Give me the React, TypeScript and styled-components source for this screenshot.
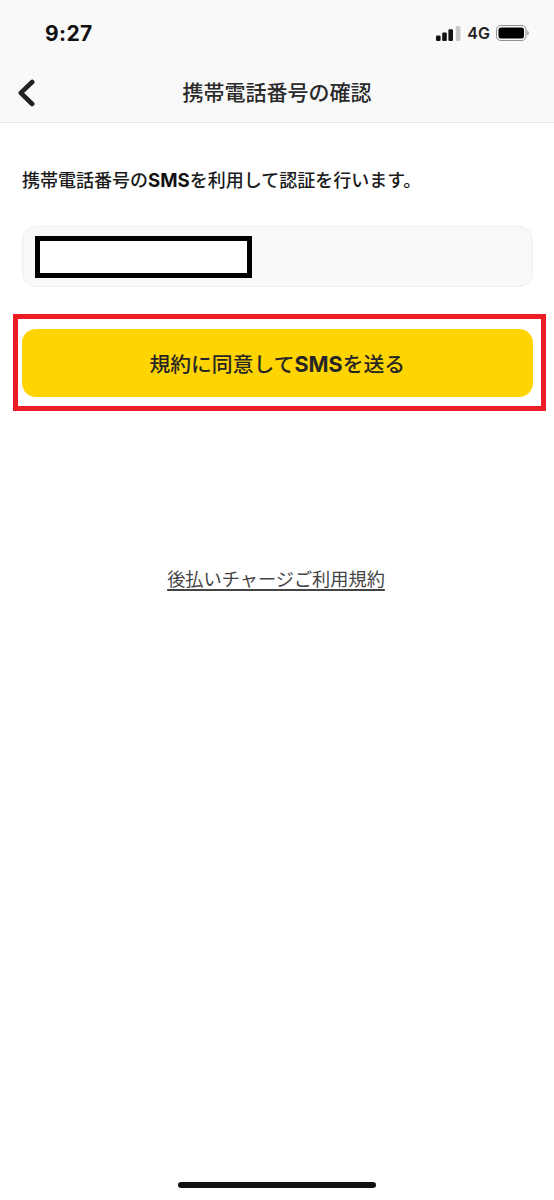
import styled, { createGlobalStyle } from "styled-components";

const GlobalStyle = createGlobalStyle`
    html, body {
        margin: 0;
        padding: 0;
        background: #ffffff;
    }
    body {
        font-family: "Inter", "Noto Sans CJK JP", sans-serif;
        color: #222222;
    }
`;

const App = () => {
    return (
        <Page>
            <GlobalStyle />
            <Header>
                <StatusBar>
                    <Time>9:27</Time>
                    <StatusIcons>
                        <svg width="25" height="15" viewBox="0 0 25 15">
                            <rect x="0" y="9.5" width="4.6" height="5.5" rx="1.2" fill="#111" />
                            <rect x="6.2" y="6.5" width="4.6" height="8.5" rx="1.2" fill="#111" />
                            <rect x="12.4" y="3.2" width="4.6" height="11.8" rx="1.2" fill="#111" />
                            <rect x="19.8" y="0" width="4.6" height="15" rx="1.2" fill="#c8c8c8" />
                        </svg>
                        <Network>4G</Network>
                        <svg width="33" height="16" viewBox="0 0 33 16">
                            <rect x="0.5" y="0.5" width="29.5" height="15" rx="4.2" fill="none" stroke="#8e8e8e" />
                            <rect x="2.5" y="2.5" width="25.5" height="11" rx="2.5" fill="#000" />
                            <path d="M31.3 5.7c1 .4 1.5 1.2 1.5 2.3s-.5 1.9-1.5 2.3z" fill="#8e8e8e" />
                        </svg>
                    </StatusIcons>
                </StatusBar>
                <NavBar>
                    <BackButton aria-label="戻る">
                        <svg width="20" height="28" viewBox="0 0 20 28">
                            <path d="M16.2 3 L4.8 13.8 L16.2 25" fill="none" stroke="#222" strokeWidth="4.6" strokeLinecap="round" strokeLinejoin="round" />
                        </svg>
                    </BackButton>
                    <NavTitle>携帯電話番号の確認</NavTitle>
                </NavBar>
            </Header>
            <Content>
                <Lead>携帯電話番号の<strong>SMS</strong>を利用して認証を行います。</Lead>
                <PhoneField>
                    <Redaction />
                </PhoneField>
                <Highlight>
                    <SubmitButton>規約に同意して<strong>SMS</strong>を送る</SubmitButton>
                </Highlight>
                <TermsLink href="#">後払いチャージご利用規約</TermsLink>
            </Content>
            <HomeIndicator />
        </Page>
    );
};

export default App;

const Page = styled.div`
    display: flex;
    flex-direction: column;
    min-height: 100vh;
    box-sizing: border-box;
    padding-bottom: 12px;
`;

const Header = styled.header`
    background: #f9f9f9;
    border-bottom: 1px solid #e6e6e6;
`;

const StatusBar = styled.div`
    display: flex;
    align-items: center;
    justify-content: space-between;
    height: 66px;
    padding: 0 25px 0 45px;
    box-sizing: border-box;
`;

const Time = styled.span`
    font-size: 21px;
    font-weight: 700;
    color: #111111;
    letter-spacing: 0.4px;
`;

const StatusIcons = styled.div`
    display: flex;
    align-items: center;
    gap: 6px;
`;

const Network = styled.span`
    font-size: 16px;
    font-weight: 600;
    color: #222222;
`;

const NavBar = styled.nav`
    position: relative;
    display: flex;
    align-items: center;
    justify-content: center;
    height: 56px;
    box-sizing: border-box;
    padding-bottom: 2px;
`;

const BackButton = styled.button`
    position: absolute;
    left: 16px;
    top: 13px;
    display: flex;
    padding: 0;
    border: 0;
    background: none;
`;

const NavTitle = styled.h1`
    margin: 0;
    font-size: 21px;
    font-weight: 500;
    line-height: 30px;
    color: #2a2a2a;
`;

const Content = styled.main`
    display: flex;
    flex-direction: column;
    align-items: stretch;
    padding: 0 8px 0 13px;
`;

const Lead = styled.p`
    margin: 44px 0 0 9px;
    font-size: 18px;
    font-weight: 500;
    line-height: 26px;
    color: #1a1a1a;
    white-space: nowrap;

    strong {
        font-weight: 700;
        font-size: 18.6px;
        color: #111111;
    }
`;

const PhoneField = styled.div`
    display: flex;
    align-items: center;
    height: 61px;
    box-sizing: border-box;
    margin: 32px 13px 0 9px;
    padding-left: 11.5px;
    background: #f9f9f9;
    border: 1.5px solid #eeeeee;
    border-radius: 14px;
`;

const Redaction = styled.div`
    width: 217px;
    height: 42px;
    box-sizing: border-box;
    background: #ffffff;
    border: 5px solid #000000;
`;

const Highlight = styled.div`
    display: flex;
    height: 97px;
    box-sizing: border-box;
    margin-top: 27px;
    padding: 10px 8px 9px 3.5px;
    border: 5px solid #ee1c25;
`;

const SubmitButton = styled.button`
    flex: 1;
    padding: 0;
    border: 0;
    border-radius: 14px;
    background: #ffd400;
    font-family: inherit;
    font-size: 20.8px;
    font-weight: 500;
    color: #262626;

    strong {
        font-weight: 700;
        font-size: 21.5px;
    }
`;

const TermsLink = styled.a`
    align-self: center;
    margin-top: 155px;
    margin-right: 7px;
    font-size: 18.2px;
    font-weight: 400;
    line-height: 26px;
    color: #444444;
    text-decoration: underline;
    text-decoration-thickness: 1.5px;
    text-underline-offset: 3px;
`;

const HomeIndicator = styled.div`
    align-self: center;
    width: 198px;
    height: 6px;
    margin-top: auto;
    border-radius: 3px;
    background: #111111;
`;
